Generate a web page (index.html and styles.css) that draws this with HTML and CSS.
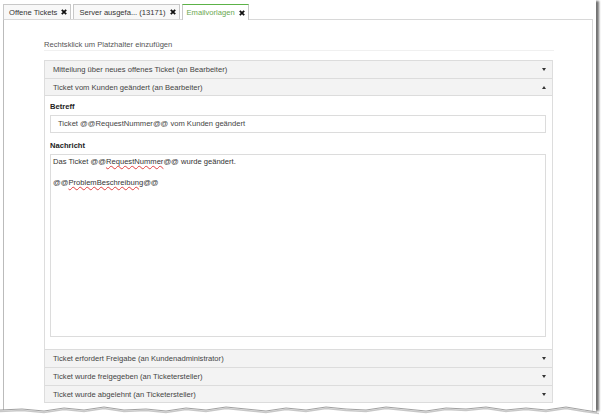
FILE: index.html
```html
<!DOCTYPE html>
<html lang="de">
<head>
<meta charset="utf-8">
<title>Emailvorlagen</title>
<link rel="stylesheet" href="styles.css">
</head>
<body>
<div class="page">
  <div class="sheet">
    <div class="tabs">
      <div class="tab">Offene Tickets <svg class="x" viewBox="0 0 6 6"><path d="M0.8 0.8L5.2 5.2M5.2 0.8L0.8 5.2"/></svg></div>
      <div class="tab">Server ausgefa... (13171) <svg class="x" viewBox="0 0 6 6"><path d="M0.8 0.8L5.2 5.2M5.2 0.8L0.8 5.2"/></svg></div>
      <div class="tab active">Emailvorlagen <svg class="x" viewBox="0 0 6 6"><path d="M0.8 0.8L5.2 5.2M5.2 0.8L0.8 5.2"/></svg></div>
    </div>
    <div class="panel">
      <div class="hint">Rechtsklick um Platzhalter einzufügen</div>
      <div class="accordion">
        <div class="head"><span>Mitteilung über neues offenes Ticket (an Bearbeiter)</span><i class="down"></i></div>
        <div class="head"><span>Ticket vom Kunden geändert (an Bearbeiter)</span><i class="up"></i></div>
        <div class="body">
          <div class="label">Betreff</div>
          <div class="input">Ticket @@RequestNummer@@ vom Kunden geändert</div>
          <div class="label">Nachricht</div>
          <div class="textarea">
            <div>Das Ticket @@<span class="sp">RequestNummer</span>@@ wurde geändert.</div>
            <div>&nbsp;</div>
            <div>@@<span class="sp">ProblemBeschreibung</span>@@</div>
          </div>
        </div>
        <div class="head"><span>Ticket erfordert Freigabe (an Kundenadministrator)</span><i class="down"></i></div>
        <div class="head"><span>Ticket wurde freigegeben (an Ticketersteller)</span><i class="down"></i></div>
        <div class="head last"><span>Ticket wurde abgelehnt (an Ticketersteller)</span><i class="down"></i></div>
      </div>
    </div>
  </div>
  <svg class="torn" viewBox="0 0 601 22" preserveAspectRatio="none">
    <path class="fill" d="M0 12 L22 11 L44 13 L64 10 L84 12 L104 9 L124 12 L146 11 L166 13 L186 10 L206 12 L226 9 L246 11 L266 13 L286 10 L306 12 L326 9 L346 11 L366 12 L386 9 L406 11 L426 13 L446 10 L466 11 L486 9 L506 12 L526 10 L546 12 L566 9 L584 12 L596 14 L601 14 L601 22 L0 22 Z"/>
    <path class="shadow" d="M0 13.5 L22 12.5 L44 14.5 L64 11.5 L84 13.5 L104 10.5 L124 13.5 L146 12.5 L166 14.5 L186 11.5 L206 13.5 L226 10.5 L246 12.5 L266 14.5 L286 11.5 L306 13.5 L326 10.5 L346 12.5 L366 13.5 L386 10.5 L406 12.5 L426 14.5 L446 11.5 L466 12.5 L486 10.5 L506 13.5 L526 11.5 L546 13.5 L566 10.5 L584 13.5 L599 15.5"/>
    <path class="edge" d="M0 12 L22 11 L44 13 L64 10 L84 12 L104 9 L124 12 L146 11 L166 13 L186 10 L206 12 L226 9 L246 11 L266 13 L286 10 L306 12 L326 9 L346 11 L366 12 L386 9 L406 11 L426 13 L446 10 L466 11 L486 9 L506 12 L526 10 L546 12 L566 9 L584 12 L597 14"/>
  </svg>
</div>
</body>
</html>
```
FILE: styles.css
```css
html, body {
  margin: 0;
  padding: 0;
  background: #ffffff;
}
.page {
  position: relative;
  width: 601px;
  height: 420px;
  overflow: hidden;
  background: #ffffff;
  font-family: "Liberation Sans", Arial, sans-serif;
  font-size: 7.6px;
  color: #444;
}
.sheet {
  height: 412px;
  padding: 4px 3px 0 3px;
  box-sizing: border-box;
  width: 596px;
  background: #fff;
  box-shadow: 4px 0 2px -1px rgba(0, 0, 0, 0.55);
}
.tabs {
  display: flex;
  gap: 1px;
  height: 15px;
}
.tab {
  display: flex;
  align-items: center;
  gap: 4px;
  padding: 0 3px 0 5px;
  border: 1px solid #c8c8c8;
  border-bottom: none;
  background: #f8f8f8;
  color: #333;
  margin-right: 1px;
}
.tab.active {
  background: #fff;
  color: #6aa84f;
  border-top: 1px solid #5cb247;
  padding: 0 3px 0 4px;
  position: relative;
  z-index: 1;
  margin-bottom: -1px;
}
.x {
  width: 6px;
  height: 6px;
}
.x path {
  stroke: #111;
  stroke-width: 1.8;
  fill: none;
}
.panel {
  height: 400px;
  border: 1px solid #d8d8d8;
  border-left-color: #bbb;
  border-bottom: none;
  padding: 20px 38px 0 40px;
}
.hint {
  color: #555;
  line-height: 9px;
  padding-bottom: 1px;
  border-bottom: 1px solid #f0f0f0;
}
.accordion {
  margin-top: 9px;
  margin-right: 1px;
  border-left: 1px solid #ddd;
  border-right: 1px solid #ddd;
}
.head {
  height: 16.7px;
  display: flex;
  align-items: center;
  justify-content: space-between;
  padding: 0 6px 0 8px;
  background: #f3f3f3;
  border-top: 1px solid #dcdcdc;
  color: #444;
}
.head.last {
  border-bottom: 1px solid #dcdcdc;
}
.down, .up {
  width: 0;
  height: 0;
  border-left: 2.5px solid transparent;
  border-right: 2.5px solid transparent;
}
.down {
  border-top: 3px solid #333;
}
.up {
  border-bottom: 3px solid #333;
}
.body {
  padding: 6px 6px 12px 5px;
  border-top: 1px solid #dcdcdc;
  background: #fff;
}
.label {
  font-weight: bold;
  color: #222;
  line-height: 10px;
  margin-bottom: 3px;
}
.input {
  height: 16px;
  line-height: 16px;
  border: 1px solid #dcdcdc;
  padding-left: 7px;
  margin-bottom: 8px;
}
.textarea {
  height: 177px;
  border: 1px solid #dcdcdc;
  padding: 2px 2px;
  line-height: 10.3px;
  color: #333;
}
.sp {
  text-decoration: underline wavy #e04040;
  text-decoration-thickness: 0.6px;
  text-underline-offset: 1px;
}
.torn {
  position: absolute;
  left: 0;
  top: 398px;
  width: 601px;
  height: 22px;
}
.torn .fill {
  fill: #fff;
}
.torn .shadow {
  fill: none;
  stroke: #c8c8c8;
  stroke-width: 1.5;
}
.torn .edge {
  fill: none;
  stroke: #888;
  stroke-width: 0.8;
}
```
